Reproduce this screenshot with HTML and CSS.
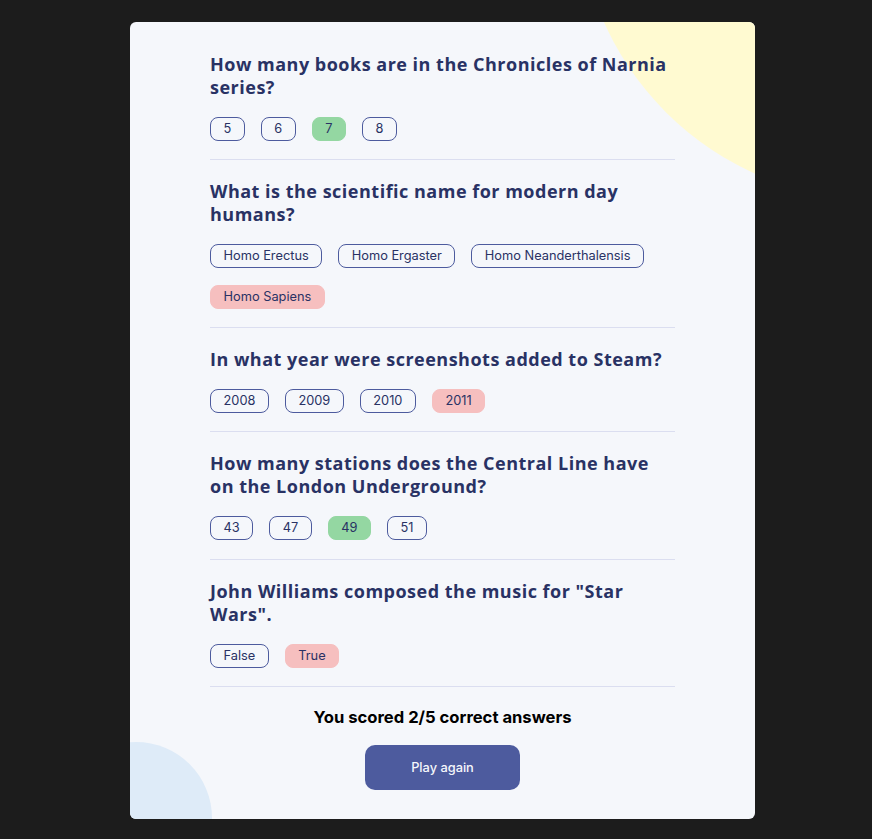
FILE: index.html
```html
<!DOCTYPE html>
<html lang="en">
<head>
<meta charset="utf-8">
<title>Quizzical</title>
<link rel="stylesheet" href="styles.css">
</head>
<body>
<main class="card">
  <div class="blob blob-yellow"></div>
  <div class="blob blob-blue"></div>
  <section class="question">
    <h2>How many books are in the Chronicles of Narnia series?</h2>
    <div class="answers">
      <span class="answer">5</span>
      <span class="answer">6</span>
      <span class="answer correct">7</span>
      <span class="answer">8</span>
    </div>
  </section>
  <section class="question">
    <h2>What is the scientific name for modern day humans?</h2>
    <div class="answers">
      <span class="answer">Homo Erectus</span>
      <span class="answer">Homo Ergaster</span>
      <span class="answer">Homo Neanderthalensis</span>
      <span class="answer wrong">Homo Sapiens</span>
    </div>
  </section>
  <section class="question">
    <h2>In what year were screenshots added to Steam?</h2>
    <div class="answers">
      <span class="answer">2008</span>
      <span class="answer">2009</span>
      <span class="answer">2010</span>
      <span class="answer wrong">2011</span>
    </div>
  </section>
  <section class="question">
    <h2>How many stations does the Central Line have on the London Underground?</h2>
    <div class="answers">
      <span class="answer">43</span>
      <span class="answer">47</span>
      <span class="answer correct">49</span>
      <span class="answer">51</span>
    </div>
  </section>
  <section class="question">
    <h2>John Williams composed the music for "Star Wars".</h2>
    <div class="answers">
      <span class="answer">False</span>
      <span class="answer wrong">True</span>
    </div>
  </section>
  <footer class="result">
    <p class="score">You scored 2/5 correct answers</p>
    <button class="play">Play again</button>
  </footer>
</main>
</body>
</html>
```
FILE: styles.css
```css
html, body {
  margin: 0;
  background: #1c1c1c;
}
body {
  padding: 22px 0 20px 130px;
}
.card {
  position: relative;
  overflow: hidden;
  box-sizing: border-box;
  width: 625px;
  height: 797px;
  padding: 10.5px 80px 0;
  background: #f5f7fb;
  border-radius: 6px;
}
.blob {
  position: absolute;
  border-radius: 50%;
}
.blob-yellow {
  width: 600px;
  height: 600px;
  left: 448px;
  top: -422px;
  background: #fffad1;
}
.blob-blue {
  width: 152px;
  height: 152px;
  left: -70px;
  top: 720px;
  background: #deebf8;
}
.question {
  position: relative;
  padding: 20px 0 18.3px;
  border-bottom: 1px solid #dbdef0;
}
.question h2 {
  margin: 0 0 18px;
  font-family: "Open Sans", "Noto Sans", sans-serif;
  font-weight: 700;
  font-size: 18px;
  line-height: 23px;
  color: #293264;
  letter-spacing: 0.5px;
}
.answers {
  display: flex;
  flex-wrap: wrap;
  gap: 17px 16px;
}
.answer {
  box-sizing: border-box;
  height: 24px;
  padding: 0 12.5px;
  border: 1px solid #4d5b9e;
  border-radius: 8px;
  font-family: Inter, "Noto Sans", sans-serif;
  font-size: 12.8px;
  line-height: 22px;
  color: #293264;
}
.answer.correct {
  background: #94d7a2;
  border-color: #94d7a2;
}
.answer.wrong {
  background: #f6bfbf;
  border-color: #f6bfbf;
}
.result {
  position: relative;
  display: flex;
  flex-direction: column;
  align-items: center;
}
.score {
  margin: 21px 0 18.5px;
  font-family: Inter, "Noto Sans", sans-serif;
  font-weight: 700;
  font-size: 16.6px;
  line-height: 19px;
  color: #000;
}
.play {
  width: 155px;
  height: 45px;
  border: none;
  border-radius: 10px;
  background: #4d5b9e;
  color: #f5f7fb;
  font-family: Inter, "Noto Sans", sans-serif;
  font-size: 12.8px;
  font-weight: 500;
}
```
